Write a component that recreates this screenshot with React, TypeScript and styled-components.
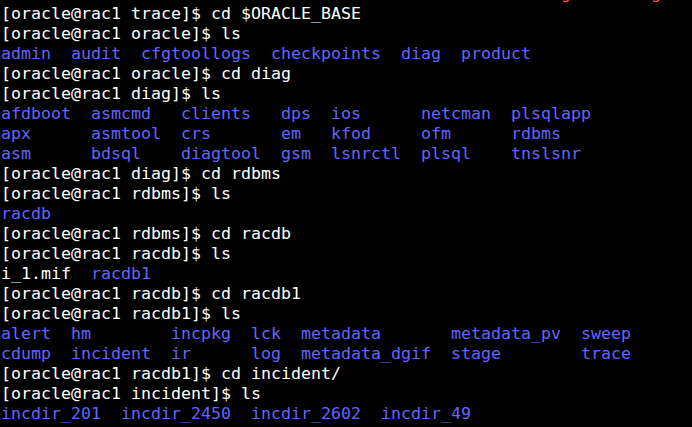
import React from "react";
import styled, { createGlobalStyle } from "styled-components";

const GlobalStyle = createGlobalStyle`
  html, body {
    margin: 0;
    padding: 0;
    background: #000000;
  }
`;

const Terminal = styled.div`
  width: 692px;
  height: 427px;
  overflow: hidden;
  background: #000000;
  padding: 4px 0 0 1px;
  box-sizing: border-box;
  font-family: "DejaVu Sans Mono", "Liberation Mono", monospace;
  font-size: 16.61px;
  color: #ffffff;
`;

const Line = styled.div<{ $clipTop?: boolean }>`
  height: 20px;
  line-height: 20px;
  white-space: pre;
  margin-top: ${(p) => (p.$clipTop ? "-20px" : "0")};
`;

const Seg = styled.span<{ $kind: "text" | "dir" | "err" }>`
  color: ${(p) =>
    p.$kind === "dir" ? "#6464ff" : p.$kind === "err" ? "#ff5555" : "#ffffff"};
`;

type Kind = "text" | "dir" | "err";
type Segment = [string, Kind];

const P = (dir: string, cmd: string): Segment[] => [
  [`[oracle@rac1 ${dir}]$ ${cmd}`, "text"],
];

const pad = (s: string, w: number) => s + " ".repeat(Math.max(0, w - s.length));

const dirRow = (cells: string[], widths: number[]): Segment[] =>
  cells.map((c, i) => [i < cells.length - 1 ? pad(c, widths[i]) : c, "dir"] as Segment);

const diagW = [9, 9, 10, 5, 9, 9, 0];
const racW = [7, 10, 8, 5, 15, 13, 0];

const lines: Segment[][] = [
  [[" ".repeat(50) + "Warning: missing log", "err"]],
  P("trace", "cd $ORACLE_BASE"),
  P("oracle", "ls"),
  [["admin  audit  cfgtoollogs  checkpoints  diag  product", "dir"]],
  P("oracle", "cd diag"),
  P("diag", "ls"),
  dirRow(["afdboot", "asmcmd", "clients", "dps", "ios", "netcman", "plsqlapp"], diagW),
  dirRow(["apx", "asmtool", "crs", "em", "kfod", "ofm", "rdbms"], diagW),
  dirRow(["asm", "bdsql", "diagtool", "gsm", "lsnrctl", "plsql", "tnslsnr"], diagW),
  P("diag", "cd rdbms"),
  P("rdbms", "ls"),
  [["racdb", "dir"]],
  P("rdbms", "cd racdb"),
  P("racdb", "ls"),
  [
    ["i_1.mif  ", "text"],
    ["racdb1", "dir"],
  ],
  P("racdb", "cd racdb1"),
  P("racdb1", "ls"),
  dirRow(["alert", "hm", "incpkg", "lck", "metadata", "metadata_pv", "sweep"], racW),
  dirRow(["cdump", "incident", "ir", "log", "metadata_dgif", "stage", "trace"], racW),
  P("racdb1", "cd incident/"),
  P("incident", "ls"),
  [["incdir_201  incdir_2450  incdir_2602  incdir_49", "dir"]],
  P("incident", "cd incdir_201/"),
];

export default function App() {
  return (
    <>
      <GlobalStyle />
      <Terminal>
        {lines.map((segs, i) => (
          <Line key={i} $clipTop={i === 0}>
            {segs.map(([t, k], j) => (
              <Seg key={j} $kind={k}>
                {t}
              </Seg>
            ))}
          </Line>
        ))}
      </Terminal>
    </>
  );
}
